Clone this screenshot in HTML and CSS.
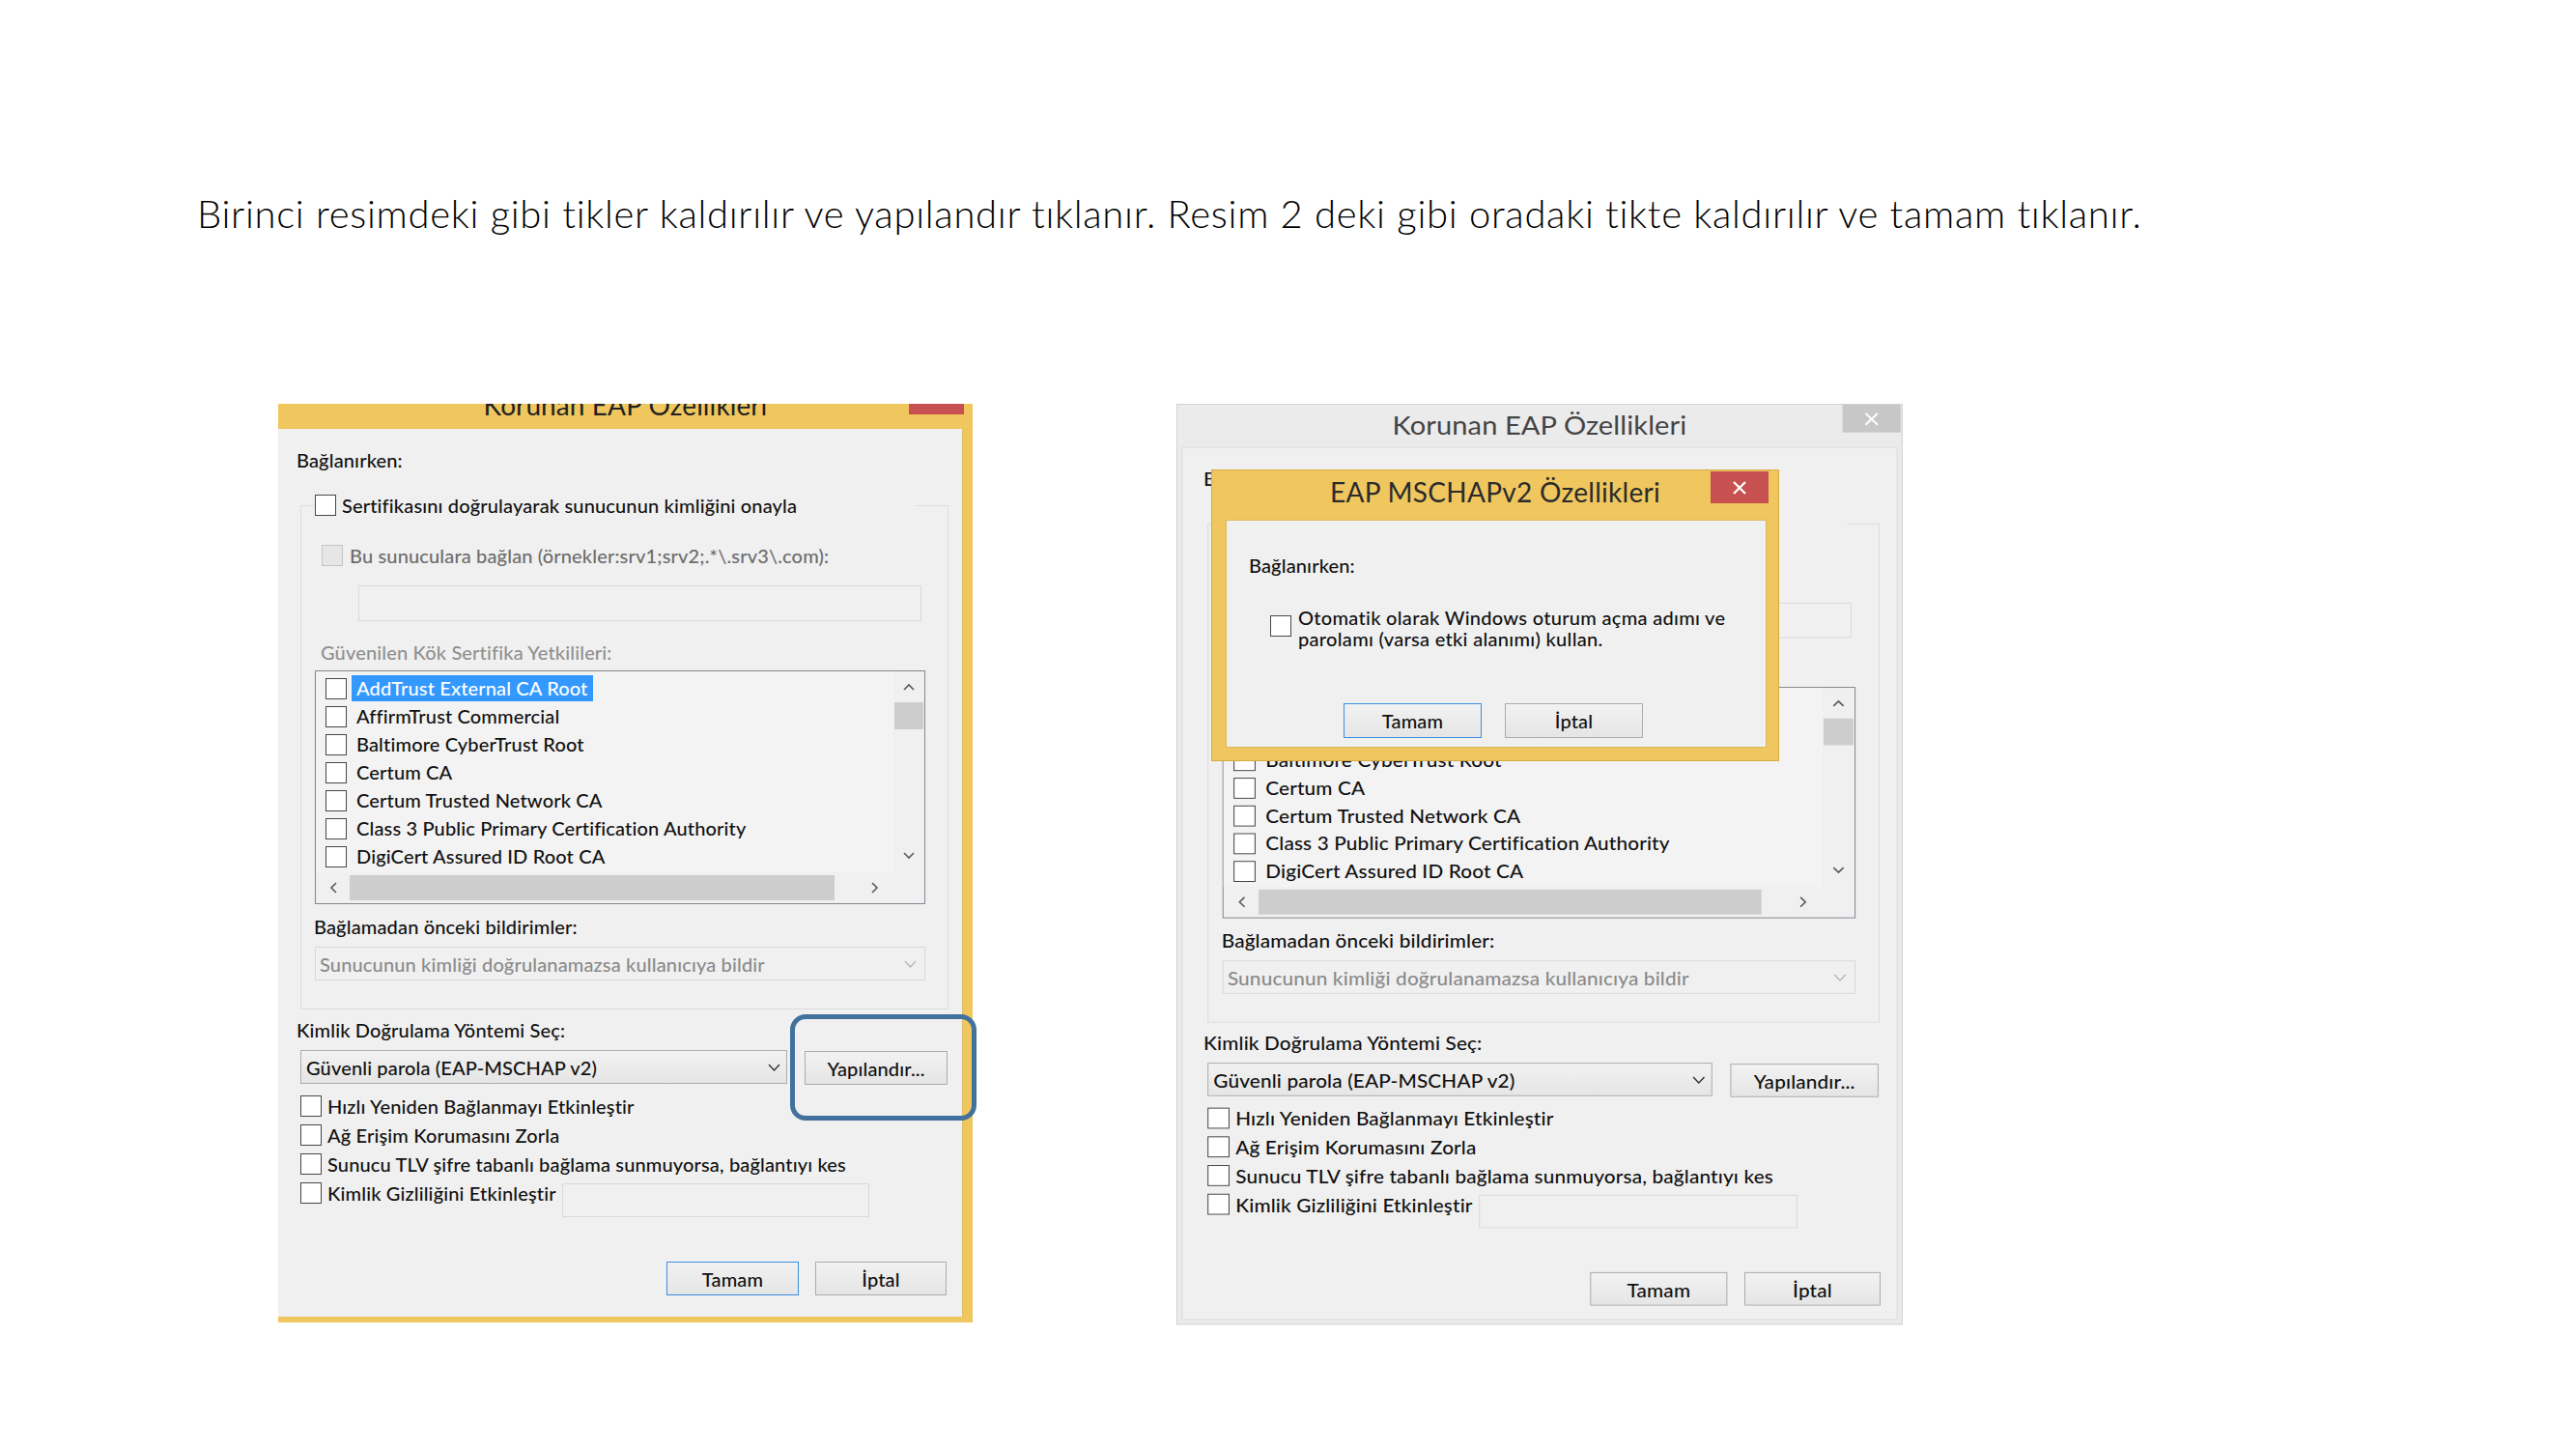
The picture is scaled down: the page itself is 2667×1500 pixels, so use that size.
FILE: index.html
```html
<!DOCTYPE html>
<html lang="tr">
<head>
<meta charset="utf-8">
<title>EAP ayarları</title>
<link rel="stylesheet" href="styles.css">
</head>
<body>
<main class="slide">
  <p class="caption">Birinci resimdeki gibi tikler kaldırılır ve yapılandır tıklanır. Resim 2 deki gibi oradaki tikte kaldırılır ve tamam tıklanır.</p>
  <div class="shots">

    <div class="shot shot-left win">
      <div class="frame-left">
        <div class="tbar">
          <span class="title">Korunan EAP Özellikleri</span>
          <span class="close close-left"></span>
        </div>
        <div class="body">
          <div class="lbl conn">Bağlanırken:</div>
          <fieldset class="group">
            <legend class="legend"><span class="legend-in"><span class="cb"></span><span>Sertifikasını doğrulayarak sunucunun kimliğini onayla</span></span></legend>
            <div class="cbrow srv"><span class="cb cb-dis"></span><span>Bu sunuculara bağlan (örnekler:srv1;srv2;.*\.srv3\.com):</span></div>
            <div class="tb tb-srv"></div>
            <div class="lbl trusted">Güvenilen Kök Sertifika Yetkilileri:</div>
            <div class="listbox">
              <div class="items">
                <div class="item"><span class="cb"></span><span class="txt sel">AddTrust External CA Root</span></div>
                <div class="item"><span class="cb"></span><span class="txt">AffirmTrust Commercial</span></div>
                <div class="item"><span class="cb"></span><span class="txt">Baltimore CyberTrust Root</span></div>
                <div class="item"><span class="cb"></span><span class="txt">Certum CA</span></div>
                <div class="item"><span class="cb"></span><span class="txt">Certum Trusted Network CA</span></div>
                <div class="item"><span class="cb"></span><span class="txt">Class 3 Public Primary Certification Authority</span></div>
                <div class="item"><span class="cb"></span><span class="txt">DigiCert Assured ID Root CA</span></div>
              </div>
              <div class="vscroll">
                <span class="arr-v"><svg width="12" height="8" viewBox="0 0 12 8"><path d="M1 7L6 2L11 7" fill="none" stroke="#5a5a5a" stroke-width="1.6"/></svg></span>
                <span class="vthumb"></span>
                <span class="spacer"></span>
                <span class="arr-v down"><svg width="12" height="8" viewBox="0 0 12 8"><path d="M1 1L6 6L11 1" fill="none" stroke="#5a5a5a" stroke-width="1.6"/></svg></span>
              </div>
              <div class="hscroll">
                <span class="arr-h"><svg width="8" height="12" viewBox="0 0 8 12"><path d="M7 1L2 6L7 11" fill="none" stroke="#5a5a5a" stroke-width="1.6"/></svg></span>
                <span class="hthumb"></span>
                <span class="spacer"></span>
                <span class="arr-h right"><svg width="8" height="12" viewBox="0 0 8 12"><path d="M1 1L6 6L1 11" fill="none" stroke="#5a5a5a" stroke-width="1.6"/></svg></span>
              </div>
              <div class="corner"></div>
            </div>
            <div class="lbl notif">Bağlamadan önceki bildirimler:</div>
            <div class="combo combo-dis"><span>Sunucunun kimliği doğrulanamazsa kullanıcıya bildir</span><svg width="13" height="8" viewBox="0 0 13 8"><path d="M1 1L6.5 7L12 1" fill="none" stroke="#b8b8b8" stroke-width="1.4"/></svg></div>
          </fieldset>
          <div class="lbl method">Kimlik Doğrulama Yöntemi Seç:</div>
          <div class="methodrow">
            <div class="combo combo-en"><span>Güvenli parola (EAP-MSCHAP v2)</span><svg width="13" height="8" viewBox="0 0 13 8"><path d="M1 1L6.5 7L12 1" fill="none" stroke="#333" stroke-width="1.4"/></svg></div>
            <button class="btn btn-cfg">Yapılandır...</button>
          </div>
          <div class="opts">
            <div class="cbrow opt"><span class="cb"></span><span>Hızlı Yeniden Bağlanmayı Etkinleştir</span></div>
            <div class="cbrow opt"><span class="cb"></span><span>Ağ Erişim Korumasını Zorla</span></div>
            <div class="cbrow opt"><span class="cb"></span><span>Sunucu TLV şifre tabanlı bağlama sunmuyorsa, bağlantıyı kes</span></div>
            <div class="opt-last">
              <div class="cbrow opt"><span class="cb"></span><span>Kimlik Gizliliğini Etkinleştir</span></div>
              <div class="tb tb-priv"></div>
            </div>
          </div>
          <div class="actions">
            <button class="btn btn-ok">Tamam</button>
            <button class="btn btn-cancel">İptal</button>
          </div>
        </div>
      </div>
      <div class="annot"></div>
    </div>

    <div class="shot shot-right win">
      <div class="frame-right">
        <div class="tbar">
          <span class="title title-inactive">Korunan EAP Özellikleri</span>
          <span class="close close-grey"><svg width="14" height="14" viewBox="0 0 14 14"><path d="M1 1L13 13M13 1L1 13" stroke="#fff" stroke-width="2"/></svg></span>
        </div>
        <div class="body body-full">
          <div class="lbl conn">Bağlanırken:</div>
          <fieldset class="group">
            <legend class="legend"><span class="legend-in"><span class="cb"></span><span>Sertifikasını doğrulayarak sunucunun kimliğini onayla</span></span></legend>
            <div class="cbrow srv"><span class="cb cb-dis"></span><span>Bu sunuculara bağlan (örnekler:srv1;srv2;.*\.srv3\.com):</span></div>
            <div class="tb tb-srv"></div>
            <div class="lbl trusted">Güvenilen Kök Sertifika Yetkilileri:</div>
            <div class="listbox">
              <div class="items">
                <div class="item"><span class="cb"></span><span class="txt sel">AddTrust External CA Root</span></div>
                <div class="item"><span class="cb"></span><span class="txt">AffirmTrust Commercial</span></div>
                <div class="item"><span class="cb"></span><span class="txt">Baltimore CyberTrust Root</span></div>
                <div class="item"><span class="cb"></span><span class="txt">Certum CA</span></div>
                <div class="item"><span class="cb"></span><span class="txt">Certum Trusted Network CA</span></div>
                <div class="item"><span class="cb"></span><span class="txt">Class 3 Public Primary Certification Authority</span></div>
                <div class="item"><span class="cb"></span><span class="txt">DigiCert Assured ID Root CA</span></div>
              </div>
              <div class="vscroll">
                <span class="arr-v"><svg width="12" height="8" viewBox="0 0 12 8"><path d="M1 7L6 2L11 7" fill="none" stroke="#5a5a5a" stroke-width="1.6"/></svg></span>
                <span class="vthumb"></span>
                <span class="spacer"></span>
                <span class="arr-v down"><svg width="12" height="8" viewBox="0 0 12 8"><path d="M1 1L6 6L11 1" fill="none" stroke="#5a5a5a" stroke-width="1.6"/></svg></span>
              </div>
              <div class="hscroll">
                <span class="arr-h"><svg width="8" height="12" viewBox="0 0 8 12"><path d="M7 1L2 6L7 11" fill="none" stroke="#5a5a5a" stroke-width="1.6"/></svg></span>
                <span class="hthumb"></span>
                <span class="spacer"></span>
                <span class="arr-h right"><svg width="8" height="12" viewBox="0 0 8 12"><path d="M1 1L6 6L1 11" fill="none" stroke="#5a5a5a" stroke-width="1.6"/></svg></span>
              </div>
              <div class="corner"></div>
            </div>
            <div class="lbl notif">Bağlamadan önceki bildirimler:</div>
            <div class="combo combo-dis"><span>Sunucunun kimliği doğrulanamazsa kullanıcıya bildir</span><svg width="13" height="8" viewBox="0 0 13 8"><path d="M1 1L6.5 7L12 1" fill="none" stroke="#b8b8b8" stroke-width="1.4"/></svg></div>
          </fieldset>
          <div class="lbl method">Kimlik Doğrulama Yöntemi Seç:</div>
          <div class="methodrow">
            <div class="combo combo-en"><span>Güvenli parola (EAP-MSCHAP v2)</span><svg width="13" height="8" viewBox="0 0 13 8"><path d="M1 1L6.5 7L12 1" fill="none" stroke="#333" stroke-width="1.4"/></svg></div>
            <button class="btn btn-cfg">Yapılandır...</button>
          </div>
          <div class="opts">
            <div class="cbrow opt"><span class="cb"></span><span>Hızlı Yeniden Bağlanmayı Etkinleştir</span></div>
            <div class="cbrow opt"><span class="cb"></span><span>Ağ Erişim Korumasını Zorla</span></div>
            <div class="cbrow opt"><span class="cb"></span><span>Sunucu TLV şifre tabanlı bağlama sunmuyorsa, bağlantıyı kes</span></div>
            <div class="opt-last">
              <div class="cbrow opt"><span class="cb"></span><span>Kimlik Gizliliğini Etkinleştir</span></div>
              <div class="tb tb-priv"></div>
            </div>
          </div>
          <div class="actions">
            <button class="btn btn-plain">Tamam</button>
            <button class="btn btn-cancel">İptal</button>
          </div>
        </div>
      </div>

      <div class="popup">
        <div class="tbar">
          <span class="title title-popup">EAP MSCHAPv2 Özellikleri</span>
          <span class="close close-red"><svg width="14" height="14" viewBox="0 0 14 14"><path d="M1 1L13 13M13 1L1 13" stroke="#fff" stroke-width="2.2"/></svg></span>
        </div>
        <div class="popup-body">
          <div class="lbl popup-conn">Bağlanırken:</div>
          <div class="popup-check"><span class="cb"></span><span class="popup-text">Otomatik olarak Windows oturum açma adımı ve<br>parolamı (varsa etki alanımı) kullan.</span></div>
          <div class="popup-btns">
            <button class="btn btn-ok">Tamam</button>
            <button class="btn">İptal</button>
          </div>
        </div>
      </div>
    </div>

  </div>
</main>
</body>
</html>
```

FILE: styles.css
```css
* { box-sizing: border-box; }
html, body { margin: 0; padding: 0; background: #fff; }
body {
  width: 2667px;
  height: 1500px;
  overflow: hidden;
  font-family: Lato, "Noto Sans", sans-serif;
}

.slide { display: flex; flex-direction: column; align-items: flex-start; }

.caption {
  margin: 0;
  padding: 198px 0 0 204px;
  font-weight: 300;
  font-size: 40px;
  line-height: 47px;
  letter-spacing: 0.7px;
  color: #000;
  white-space: nowrap;
}

.shots {
  display: flex;
  align-items: flex-start;
  gap: 211px;
  margin-top: 173px;
  padding-left: 288px;
}

.win { font-size: 20px; letter-spacing: 0.15px; font-weight: 500; color: #111; }
.shot { position: relative; flex: none; }

/* ---------- left window (cropped screenshot) ---------- */
.shot-left { width: 719px; height: 951px; }
.frame-left {
  width: 719px;
  height: 951px;
  background: #f0c75e;
  padding: 0 10px 6px 0;
  overflow: hidden;
  display: flex;
  flex-direction: column;
}
.tbar {
  flex: none;
  display: grid;
  grid-template-columns: 1fr auto 1fr;
  align-items: start;
}
.frame-left .tbar { height: 45px; margin: -19px -10px 0 0; }
.title {
  grid-column: 2;
  font-size: 28px;
  font-weight: 400;
  line-height: 40px;
  letter-spacing: 0.1px;
  white-space: nowrap;
  color: #222;
}
.close {
  grid-column: 3;
  justify-self: end;
  display: flex;
  align-items: center;
  justify-content: center;
}
.close-left { width: 57px; height: 29px; margin: 1px 9px 0 0; background: #c75050; }

.annot {
  position: absolute;
  left: 530px;
  top: 632px;
  width: 193px;
  height: 110px;
  border: 5px solid #41719c;
  border-radius: 16px;
}

/* ---------- dialog body (shared) ---------- */
.body {
  flex: none;
  width: 709px;
  height: 919px;
  background: #f0f0f0;
  padding-top: 20px;
  display: flex;
  flex-direction: column;
  align-items: flex-start;
  overflow: hidden;
  border-right: 1px solid #dcbf6e;
}
.lbl { height: 24px; line-height: 24px; white-space: nowrap; }
.conn { margin-left: 19px; }

.group {
  margin: 21px 0 0 23px;
  padding: 0 0 29px;
  width: 671px;
  min-width: 0;
  border: 1px solid #dcdcdc;
  display: flex;
  flex-direction: column;
  align-items: flex-start;
}
.legend { padding: 0; margin-left: 14px; width: 623px; height: 28px; }
.legend-in { display: flex; align-items: center; gap: 6px; height: 28px; white-space: nowrap; }

.cbrow { display: flex; align-items: center; white-space: nowrap; }
.cb {
  flex: none;
  width: 22px;
  height: 22px;
  border: 1px solid #474747;
  background: #fff;
}
.cb-dis { border-color: #c6c6c6; background: #e6e6e6; }
.srv { margin: 26px 0 0 21px; height: 24px; gap: 7px; color: #6d6d6d; }

.tb { border: 1px solid #d9d9d9; background: #f0f0f0; }
.tb-srv { margin: 19px 0 0 59px; width: 583px; height: 37px; }
.trusted { margin: 20px 0 0 20px; color: #8f8f8f; }

.listbox {
  margin: 7px 0 0 14px;
  width: 632px;
  height: 242px;
  border: 1px solid #828790;
  background: #f0f0f0;
  display: grid;
  grid-template-columns: 598px 32px;
  grid-template-rows: 208px 32px;
}
.items { padding-top: 3px; overflow: hidden; background: #f3f3f3; }
.item { height: 29px; display: flex; align-items: center; padding-left: 10px; white-space: nowrap; }
.item .txt { margin-left: 5px; padding: 0 5px; line-height: 27px; }
.item .sel { background: #3399ff; color: #fff; }

.vscroll { display: flex; flex-direction: column; align-items: center; }
.arr-v { height: 32px; width: 100%; display: flex; align-items: center; justify-content: center; }
.arr-v.down { height: 34px; }
.vthumb { width: 30px; height: 28px; background: #cdcdcd; }
.spacer { flex: 1; }
.hscroll { display: flex; align-items: center; }
.arr-h { width: 35px; height: 32px; display: flex; align-items: center; justify-content: center; }
.arr-h.right { width: 38px; }
.hthumb { width: 502px; height: 26px; background: #cdcdcd; }

.notif { margin: 11px 0 0 13px; }
.combo {
  display: flex;
  align-items: center;
  justify-content: space-between;
  height: 35px;
  white-space: nowrap;
}
.combo-dis {
  margin: 9px 0 0 14px;
  width: 632px;
  border: 1px solid #d9d9d9;
  background: #f0f0f0;
  color: #8a8a8a;
  padding: 0 8px 0 4px;
}
.method { margin: 9px 0 0 19px; }
.methodrow { display: flex; align-items: flex-start; margin: 9px 0 0 23px; }
.combo-en {
  width: 504px;
  border: 1px solid #acacac;
  background: linear-gradient(#f2f2f2, #e5e5e5);
  padding: 0 6px 0 5px;
}

.btn {
  font: inherit;
  color: inherit;
  letter-spacing: inherit;
  height: 35px;
  padding: 0;
  border: 1px solid #acacac;
  background: linear-gradient(#f2f2f2, #e5e5e5);
  display: flex;
  align-items: center;
  justify-content: center;
}
.btn-cfg { margin: 1px 0 0 18px; width: 148px; }
.btn-ok { border-color: #3c8ee0; }

.opts { display: flex; flex-direction: column; margin: 7px 0 0 23px; }
.opt { height: 30px; gap: 6px; }
.opt-last { display: flex; align-items: flex-start; }
.opt-last .opt { width: 271px; }
.tb-priv { width: 318px; height: 35px; margin-top: 5px; }

.actions {
  align-self: stretch;
  display: flex;
  justify-content: flex-end;
  gap: 17px;
  padding-right: 16px;
  margin-top: 46px;
}
.actions .btn { width: 137px; }
.actions .btn-cancel { width: 136px; }

/* ---------- right window (inactive, slightly stretched screenshot) ---------- */
.shot-right { width: 752px; height: 953px; }
.frame-right {
  width: 725px;
  height: 963px;
  transform: scale(1.037, 0.99);
  transform-origin: 0 0;
  background: #ebebeb;
  border: 1px solid #d2d2d2;
  padding: 0 4px 4px;
  display: flex;
  flex-direction: column;
}
.frame-right .tbar { height: 44px; margin: 0 -4px; }
.title-inactive { color: #444; }
.close-grey { width: 58px; height: 29px; margin-right: 1px; background: #c7c7c7; }
.body-full { width: auto; height: 913px; padding-left: 2px; border: 1px solid #dcdcdc; }

/* ---------- popup dialog over the right window ---------- */
.popup {
  position: absolute;
  left: 36px;
  top: 68px;
  width: 588px;
  height: 302px;
  background: #f0c75e;
  border: 1px solid #d6a945;
  display: flex;
  flex-direction: column;
}
.popup .tbar { height: 51px; }
.title-popup { color: #2b2b2b; padding-top: 2px; letter-spacing: 0.3px; }
.close-red { width: 60px; height: 33px; margin: 1px 10px 0 0; background: #c75050; }
.popup-body {
  margin-left: 14px;
  width: 560px;
  height: 236px;
  background: #f0f0f0;
  border: 1px solid #dcb95e;
  display: flex;
  flex-direction: column;
  align-items: flex-start;
}
.popup-conn { margin: 34px 0 0 23px; }
.popup-check { display: flex; align-items: flex-start; margin: 31px 0 0 45px; }
.popup-check .cb { margin-top: 9px; }
.popup-text { margin-left: 7px; line-height: 22px; white-space: nowrap; letter-spacing: 0.3px; }
.popup-btns { display: flex; gap: 24px; margin: 56px 0 0 121px; }
.popup-btns .btn { width: 143px; height: 36px; }
```
